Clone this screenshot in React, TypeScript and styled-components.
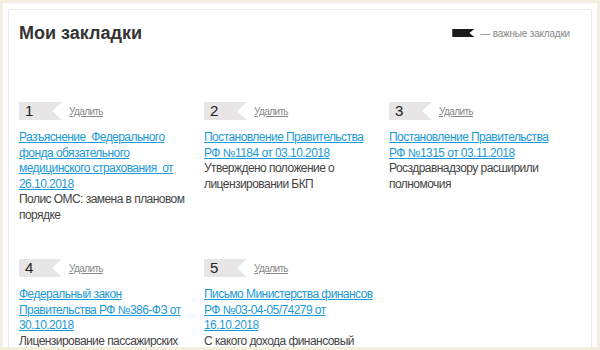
import React from "react";
import styled, { createGlobalStyle } from "styled-components";

const GlobalStyle = createGlobalStyle`
  html, body {
    margin: 0;
    padding: 0;
    background: #ffffff;
  }
  body {
    font-family: "Liberation Sans", Arial, sans-serif;
  }
`;

const Frame = styled.div`
  box-sizing: border-box;
  width: 600px;
  height: 350px;
  border: 3px solid #f3eedf;
  padding: 6px 5px 0 5px;
  overflow: hidden;
  background: #fff;
`;

const Card = styled.section`
  box-sizing: border-box;
  min-height: 400px;
  border: 1px solid #e8eaf1;
  background: #fff;
  padding: 12px 21px 0 10px;
`;

const Header = styled.header`
  display: flex;
  justify-content: space-between;
  align-items: center;
`;

const Title = styled.h1`
  margin: 0;
  font-size: 18px;
  line-height: 22px;
  font-weight: 700;
  color: #333;
`;

const Legend = styled.div`
  display: flex;
  align-items: center;
  gap: 6px;
  font-size: 10px;
  letter-spacing: -0.2px;
  color: #8a8a8a;
`;

const Flag = styled.span`
  display: block;
  width: 22px;
  height: 8px;
  background: #1c1a1a;
  clip-path: polygon(0 0, 100% 0, 78% 50%, 100% 100%, 0 100%);
`;

const Grid = styled.div`
  display: grid;
  grid-template-columns: repeat(3, 185px);
  row-gap: 36px;
  margin-top: 58px;
`;

const Item = styled.article`
  width: 176px;
`;

const TagRow = styled.div`
  display: flex;
  align-items: center;
  gap: 7px;
  height: 18px;
  margin-bottom: 10px;
`;

const Tag = styled.span`
  box-sizing: border-box;
  width: 43px;
  height: 18px;
  padding-left: 6px;
  background: #e7e5e5;
  clip-path: polygon(0 0, 100% 0, 77% 50%, 100% 100%, 0 100%);
  font-size: 15px;
  line-height: 18px;
  color: #222;
`;

const Remove = styled.a`
  font-size: 10px;
  letter-spacing: -0.6px;
  color: #888;
  text-decoration: underline;
  cursor: pointer;
`;

const DocLink = styled.a`
  display: block;
  font-size: 12px;
  letter-spacing: -0.55px;
  line-height: 15.5px;
  color: #1b9ad6;
  text-decoration: underline;
  cursor: pointer;
`;

const Note = styled.p`
  margin: 0;
  font-size: 12px;
  letter-spacing: -0.55px;
  line-height: 15.5px;
  color: #444;
`;

const bookmarks = [
  {
    title: "Разъяснение\u00a0 Федерального фонда обязательного медицинского страхования\u00a0 от 26.10.2018",
    note: "Полис ОМС: замена в плановом порядке",
  },
  {
    title: "Постановление Правительства РФ №1184 от 03.10.2018",
    note: "Утверждено положение о лицензировании БКП",
  },
  {
    title: "Постановление Правительства РФ №1315 от 03.11.2018",
    note: "Росздравнадзору расширили полномочия",
  },
  {
    title: "Федеральный закон Правительства РФ №386-ФЗ от 30.10.2018",
    note: "Лицензирование пассажирских перевозок",
  },
  {
    title: "Письмо Министерства финансов РФ №03-04-05/74279 от 16.10.2018",
    note: "С какого дохода финансовый управляющий",
  },
];

export default function App() {
  return (
    <>
      <GlobalStyle />
      <Frame>
        <Card>
          <Header>
            <Title>Мои закладки</Title>
            <Legend>
              <Flag />
              <span>— важные закладки</span>
            </Legend>
          </Header>
          <Grid>
            {bookmarks.map((b, i) => (
              <Item key={i}>
                <TagRow>
                  <Tag>{i + 1}</Tag>
                  <Remove>Удалить</Remove>
                </TagRow>
                <DocLink>{b.title}</DocLink>
                <Note>{b.note}</Note>
              </Item>
            ))}
          </Grid>
        </Card>
      </Frame>
    </>
  );
}
